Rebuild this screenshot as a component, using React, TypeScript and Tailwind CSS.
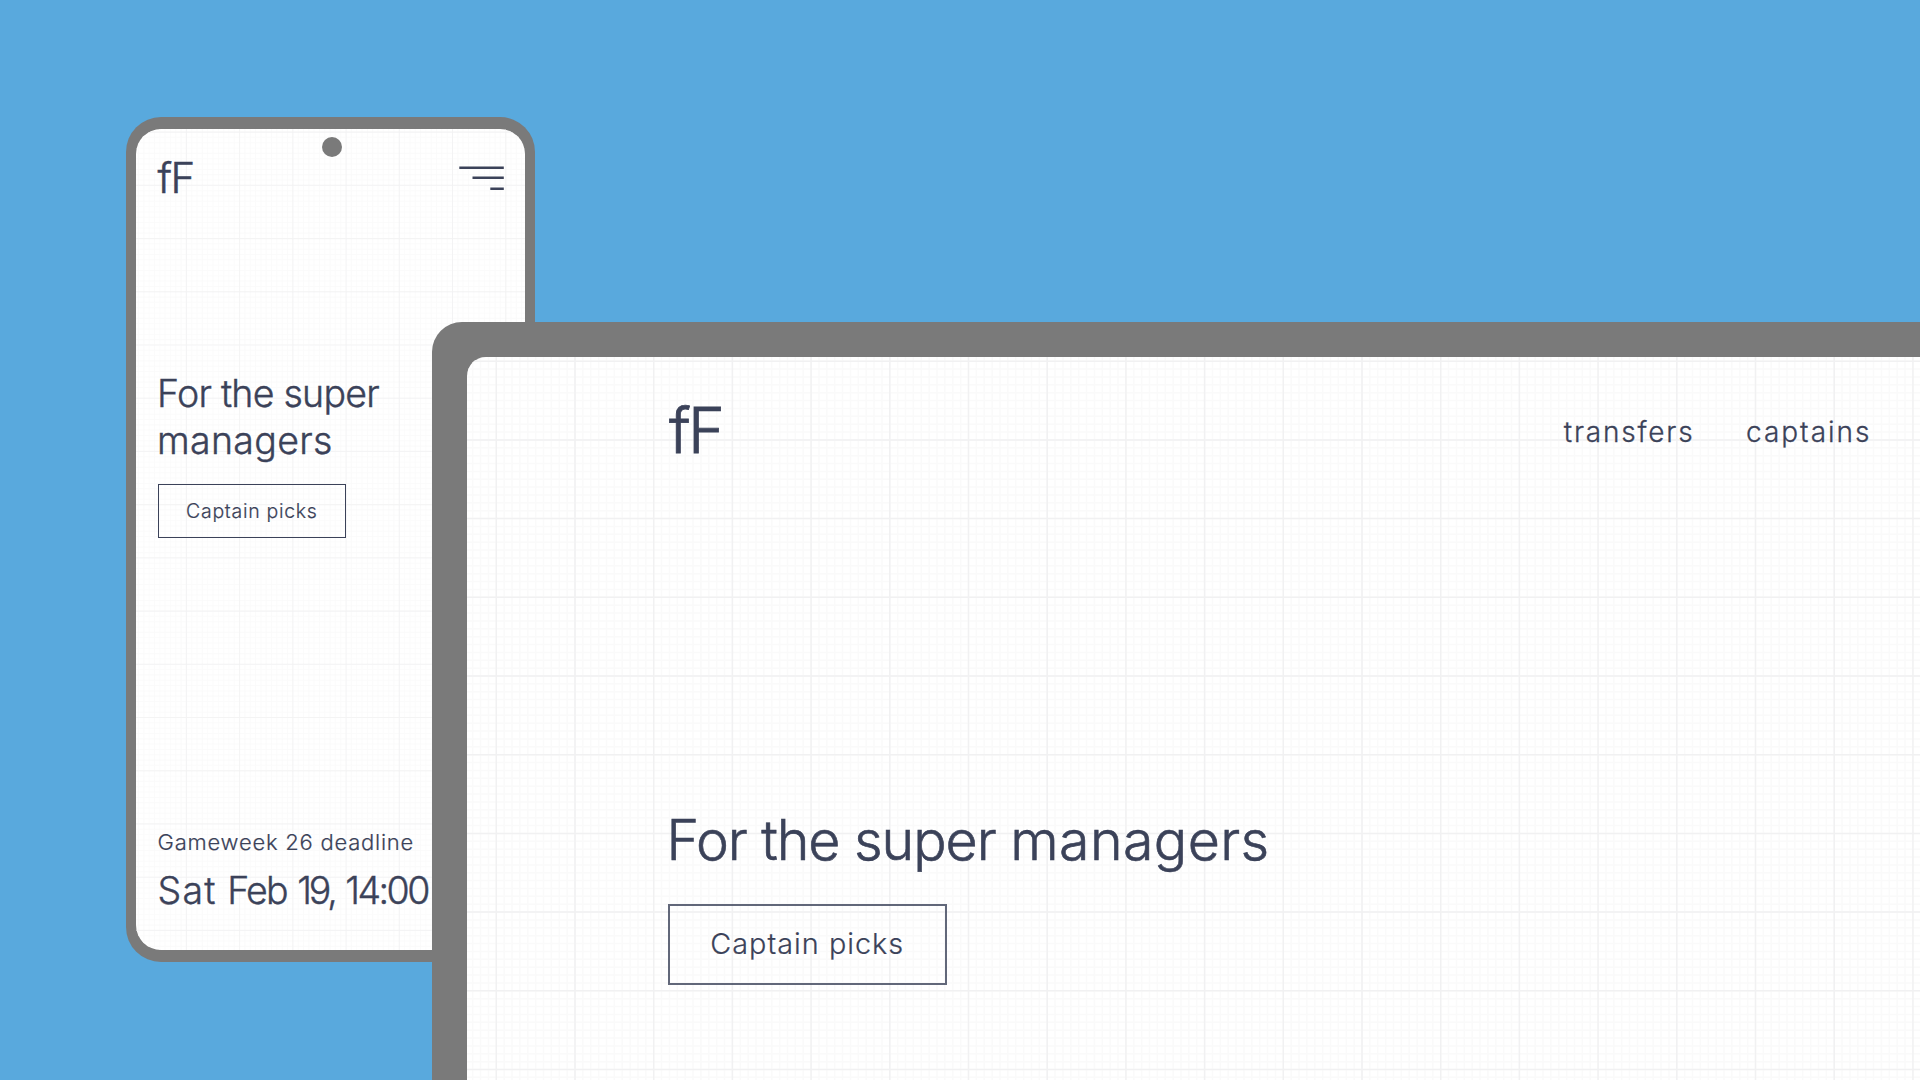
import React from "react";

type GridProps = {
  width: number;
  height: number;
  startX: number;
  startY: number;
  step: number;
  strokeWidth: number;
};

function offsets(start: number, step: number, limit: number) {
  const list: number[] = [];
  for (let i = 0; start + i * step < limit; i++) list.push(start + i * step);
  return list;
}

/* Graph-paper background: ten fine cells for every heavy one. */
function GraphPaper({ width, height, startX, startY, step, strokeWidth }: GridProps) {
  const fine = step / 10;
  const path = (s: number, x0: number, y0: number) =>
    offsets(x0, s, width).map((x) => `M${x.toFixed(2)} 0V${height}`).join("") +
    offsets(y0, s, height).map((y) => `M0 ${y.toFixed(2)}H${width}`).join("");
  return (
    <svg className="absolute inset-0" width={width} height={height} fill="none">
      <path d={path(fine, startX % fine, startY % fine)} stroke="#fafafa" strokeWidth={strokeWidth} />
      <path d={path(step, startX, startY)} stroke="#f1f1f2" strokeWidth={strokeWidth} />
    </svg>
  );
}

function MenuIcon() {
  return (
    <svg className="mt-[18px]" width="45" height="24" viewBox="0 0 45 24" stroke="#3b4259" strokeWidth="2.5">
      <path d="M0.3 1.7H44.8M13.5 11.7H44.8M31.3 22.7H44.8" />
    </svg>
  );
}

function Phone() {
  return (
    <div className="absolute left-[126px] top-[117px] h-[845px] w-[409px] rounded-[35px] bg-[#7a7a7a] px-[10.4px] pt-[12px] pb-[12.5px]">
      <div className="relative h-full overflow-hidden rounded-[25px] bg-white">
        <GraphPaper width={389} height={821} startX={50.4} startY={3.1} step={53.22} strokeWidth={0.8} />
        <div className="absolute left-[185.6px] top-[8px] size-5 rounded-full bg-[#7a7a7a]" />
        <div className="relative flex h-full flex-col items-start pl-[21.2px]">
          <header className="flex w-full items-start justify-between pt-[19px] pr-[21px]">
            <span className="text-[42px] leading-[60px] tracking-[-1.6px] [-webkit-text-stroke:0.5px_#3b4259]">fF</span>
            <MenuIcon />
          </header>
          <h1 className="mt-[162px] -ml-[0.5px] text-[37.5px] leading-[47px] [-webkit-text-stroke:0.4px_#3b4259]">
            <span className="block tracking-[-0.75px]">For the super</span>
            <span className="block tracking-[0.3px]">managers</span>
          </h1>
          <button className="mt-[20px] flex h-[54px] w-[188.5px] items-center justify-center border border-[#3b4259] pt-px text-[19.5px] tracking-[0.7px] [-webkit-text-stroke:0.2px_#3b4259]">
            Captain picks
          </button>
          <p className="mt-[289px] text-[22px] leading-[30px] tracking-[0.76px] [-webkit-text-stroke:0.2px_#3b4259]">
            Gameweek 26 deadline
          </p>
          <p className="mt-[11.4px] text-[37.5px] leading-[46px] whitespace-nowrap [-webkit-text-stroke:0.4px_#3b4259]">
            <span className="tracking-[1.2px]">Sat</span> <span className="tracking-[-1.8px]">Feb</span>{" "}
            <span className="tracking-[-3.2px]">19,</span> <span className="tracking-[-2.5px]">14:00</span>
          </p>
        </div>
      </div>
    </div>
  );
}

function Desktop() {
  return (
    <div className="absolute left-[432px] top-[322px] h-[758px] w-[1488px] overflow-hidden rounded-tl-[30px] bg-[#7a7a7a] pl-[35px] pt-[34.6px]">
      <div className="relative h-full overflow-hidden rounded-tl-[19px] bg-white">
        <GraphPaper width={1453} height={724} startX={29.3} startY={4.2} step={78.7} strokeWidth={1.5} />
        <div className="relative flex flex-col items-start pl-[201px]">
          <header className="flex w-full items-start justify-between pt-[33.5px] pr-[48.5px]">
            <span className="ml-px text-[62.7px] leading-[80px] tracking-[-2.6px] [-webkit-text-stroke:0.8px_#3b4259]">fF</span>
            <nav className="mt-[22px] flex gap-[51.5px] text-[28px] leading-10 [-webkit-text-stroke:0.3px_#3b4259]">
              <a className="tracking-[1.8px]">transfers</a>
              <a className="tracking-[2px]">captains</a>
            </nav>
          </header>
          <h1 className="mt-[335px] -ml-[1.5px] text-[55.5px] leading-[70px] [-webkit-text-stroke:0.6px_#3b4259]">
            <span className="tracking-[-1.05px]">For the super </span>
            <span className="tracking-[0.4px]">managers</span>
          </h1>
          <button className="mt-[29px] flex h-[80.5px] w-[278.5px] items-center justify-center border-2 border-[#3b4259]/80 pb-[2px] text-[28.8px] tracking-[1.02px] [-webkit-text-stroke:0.2px_#3b4259]">
            Captain picks
          </button>
        </div>
      </div>
    </div>
  );
}

export default function App() {
  return (
    <main className="relative h-[1080px] w-[1920px] overflow-hidden bg-[#59a9dd] font-['Inter',sans-serif] font-light text-[#3b4259]">
      <Phone />
      <Desktop />
    </main>
  );
}
